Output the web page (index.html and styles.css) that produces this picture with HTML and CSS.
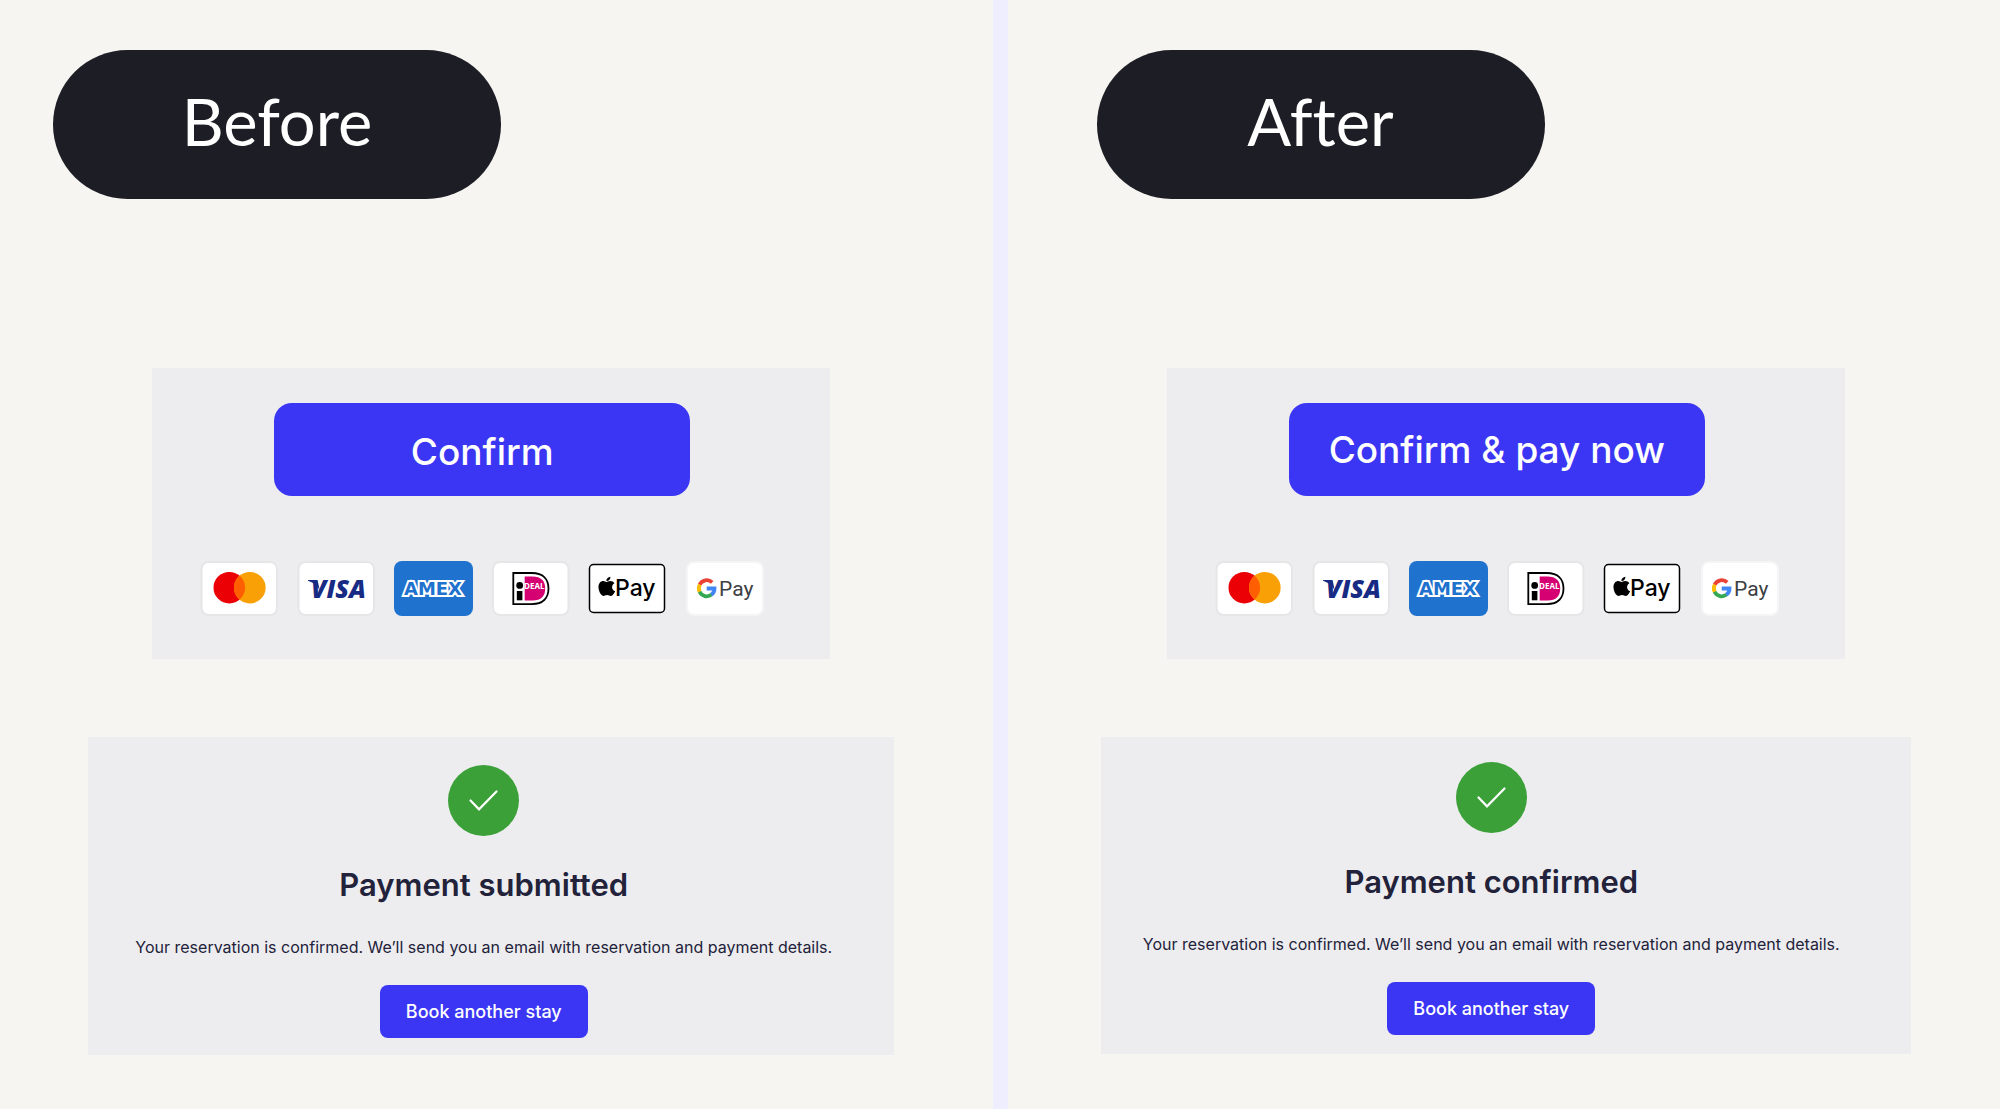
FILE: index.html
```html
<!DOCTYPE html>
<html lang="en">
<head>
    <meta charset="UTF-8">
    <meta name="viewport" content="width=device-width, initial-scale=1.0">
    <title>Payment - Before and After</title>
    <link rel="stylesheet" href="styles.css">
</head>
<body>
    <!-- Payment logos, shared by both panels -->
    <svg class="sprite" aria-hidden="true">
        <symbol id="mastercard" viewBox="0 0 79 57">
            <rect x="1.5" y="2" width="75.500" height="53" rx="7" fill="#fff" stroke="#e6e6e8" stroke-width="2"/>
            <circle cx="29.3" cy="27.7" r="15.8" fill="#eb0006"/>
            <circle cx="49.8" cy="27.7" r="15.8" fill="#f9a006"/>
            <path d="M39.5 15.6a15.8 15.8 0 0 1 0 24.2a15.8 15.8 0 0 1 0-24.2z" fill="#ff5f00"/>
        </symbol>
        <symbol id="visa" viewBox="0 0 79 57">
            <rect x="1.5" y="2" width="75.500" height="53" rx="7" fill="#fff" stroke="#e6e6e8" stroke-width="2"/>
            <path d="M11 20h7q2.500 0 3.200 3l1.600 8q-3-7.500-11.800-10.200z" fill="#172b85"/>
            <text class="visa-text" x="14" y="38">VISA</text>
        </symbol>
        <symbol id="amex" viewBox="0 0 79 57">
            <rect x="0" y="1" width="79" height="55" rx="8" fill="#1f72cd"/>
            <text class="amex-text" x="39" y="35" text-anchor="middle">AMEX</text>
        </symbol>
        <symbol id="ideal" viewBox="0 0 79 57">
            <rect x="2" y="2" width="75.500" height="53" rx="7" fill="#fff" stroke="#e6e6e8" stroke-width="2"/>
            <path d="M22.300 13h18.500c11.500 0 16.700 6.500 16.700 15.600s-5.200 15.500-16.700 15.500h-18.500z" fill="#fff" stroke="#000" stroke-width="1.800"/>
            <path d="M33.700 16.500h7.500c9.300 0 13 4.800 13 12.100s-3.700 12-13 12h-7.500z" fill="#d50072"/>
            <circle cx="28.700" cy="25.400" r="3.400"/>
            <path d="M25.800 31h5.600v9.300h-5.600z"/>
            <text class="ideal-text" x="33" y="29">DEAL</text>
        </symbol>
        <symbol id="apple-pay" viewBox="0 0 79 57">
            <rect x="1.500" y="4.500" width="75" height="48" rx="4" fill="#fff" stroke="#000" stroke-width="1.500"/>
            <path d="M20.700 17.400c.2 2.600-1.900 4.600-4.200 4.600c-.2-2.400 1.800-4.500 4.200-4.600zM16.600 23c1 0 2-1 4-1c1.800 0 3.400.9 4.300 2.200c-3.600 2-3 7 .8 8.400c-.9 2.200-2.600 4.800-4.400 4.800c-1.600 0-2.100-1-4-1s-2.500 1-4 1c-2.300 0-5-5-5-9.200c0-4 2.500-6.200 5-6.200c1.500 0 2.500 1 3.300 1z" transform="translate(2.500 0) scale(.96)"/>
            <text class="apple-text" x="27" y="36">Pay</text>
        </symbol>
        <symbol id="google-pay" viewBox="0 0 79 57">
            <rect x="2" y="2" width="76" height="53" rx="7" fill="#fff" stroke="#f5f5f6" stroke-width="2"/>
            <g fill="none" stroke-width="3.800">
                <path d="M14.600 24.800a7.900 7.900 0 0 1 12.600-2.400" stroke="#ea4335"/>
                <path d="M14.800 32.200a7.900 7.900 0 0 1 0-7.600" stroke="#fbbc05"/>
                <path d="M26.600 34.600a7.900 7.900 0 0 1-12-2.800" stroke="#34a853"/>
                <path d="M21.700 28.500h7.800a8 8 0 0 1-3.100 6.300" stroke="#4285f4"/>
            </g>
            <text class="google-text" x="34" y="36">Pay</text>
        </symbol>
        <symbol id="check" viewBox="0 0 71 71">
            <circle cx="35.500" cy="35.500" r="35.500" fill="#3aa037"/>
            <path d="M22.500 35.500l8.500 8.800l17.500-17.800" fill="none" stroke="#fff" stroke-width="2.200" stroke-linecap="round"/>
        </symbol>
    </svg>

    <main class="comparison">
        <section class="panel before">
            <h1 class="pill">Before</h1>
            <div class="checkout">
                <button class="confirm">Confirm</button>
                <div class="logos">
                    <svg role="img" aria-label="Mastercard"><use href="#mastercard"/></svg>
                    <svg role="img" aria-label="Visa"><use href="#visa"/></svg>
                    <svg role="img" aria-label="American Express"><use href="#amex"/></svg>
                    <svg role="img" aria-label="iDEAL"><use href="#ideal"/></svg>
                    <svg role="img" aria-label="Apple Pay"><use href="#apple-pay"/></svg>
                    <svg role="img" aria-label="Google Pay"><use href="#google-pay"/></svg>
                </div>
            </div>
            <div class="result">
                <svg class="check" aria-hidden="true"><use href="#check"/></svg>
                <h2>Payment submitted</h2>
                <p>Your reservation is confirmed. We’ll send you an email with reservation and payment details.</p>
                <button class="book">Book another stay</button>
            </div>
        </section>

        <section class="panel after">
            <h1 class="pill">After</h1>
            <div class="checkout">
                <button class="confirm">Confirm &amp; pay now</button>
                <div class="logos">
                    <svg role="img" aria-label="Mastercard"><use href="#mastercard"/></svg>
                    <svg role="img" aria-label="Visa"><use href="#visa"/></svg>
                    <svg role="img" aria-label="American Express"><use href="#amex"/></svg>
                    <svg role="img" aria-label="iDEAL"><use href="#ideal"/></svg>
                    <svg role="img" aria-label="Apple Pay"><use href="#apple-pay"/></svg>
                    <svg role="img" aria-label="Google Pay"><use href="#google-pay"/></svg>
                </div>
            </div>
            <div class="result">
                <svg class="check" aria-hidden="true"><use href="#check"/></svg>
                <h2>Payment confirmed</h2>
                <p>Your reservation is confirmed. We’ll send you an email with reservation and payment details.</p>
                <button class="book">Book another stay</button>
            </div>
        </section>
    </main>
</body>
</html>
```
FILE: styles.css
```css
* {
    box-sizing: border-box;
}
body {
    margin: 0;
    font-family: Inter, "Liberation Sans", sans-serif;
    font-variant-ligatures: none;
    background-color: #f6f5f1;
    color: #22223a;
}
.sprite {
    display: none;
}
.comparison {
    display: grid;
    grid-template-columns: 1fr 1fr;
    column-gap: 15px;
    min-height: 100vh;
    background-color: #eeeeff;
}
.panel {
    display: flex;
    flex-direction: column;
    align-items: center;
    padding: 50px 0;
    background-color: #f6f5f1;
}
.before {
    padding-right: 10px;
}
.after {
    padding-left: 4px;
}
.pill {
    align-self: flex-start;
    width: 448px;
    margin: 0 0 169px 53px;
    padding: 34px 0 41px;
    border-radius: 75px;
    background-color: #1d1d25;
    color: white;
    font-family: Lato, sans-serif;
    font-size: 65px;
    font-weight: 400;
    line-height: 74px;
    text-align: center;
}
.after .pill {
    margin-left: 85px;
}
button {
    border: none;
    background-color: #3a36f4;
    color: white;
    font-family: inherit;
    font-weight: 500;
    cursor: pointer;
}
button:hover {
    background-color: #2a26d8;
}

/* Checkout */
.checkout {
    display: flex;
    flex-direction: column;
    align-items: center;
    width: 82%;
    max-width: 678px;
    margin-bottom: 78px;
    padding: 35px 18px 42px 0;
    background-color: #ededef;
}
.confirm {
    width: 416px;
    height: 93px;
    margin-bottom: 64px;
    padding: 4px 0 0;
    border-radius: 18px;
    font-size: 37px;
}
.after .confirm {
    padding: 0;
}
.logos {
    display: flex;
    gap: 18px;
}
.logos svg {
    width: 79px;
    height: 57px;
}
.visa-text {
    font: italic 800 25px "Open Sans", sans-serif;
    fill: #172b85;
}
.amex-text {
    font: bold 18px "DejaVu Sans", sans-serif;
    fill: #1f72cd;
    stroke: white;
    stroke-width: 4px;
    paint-order: stroke;
}
.ideal-text {
    font: bold 8px "Open Sans", sans-serif;
    fill: white;
}
.apple-text {
    font: 500 23px Inter, sans-serif;
}
.google-text {
    font: 400 21px Roboto, sans-serif;
    fill: #3c4043;
}

/* Payment result */
.result {
    display: flex;
    flex-direction: column;
    align-items: center;
    width: 82%;
    max-width: 810px;
    padding: 28px 15px 17px 0;
    background-color: #ededef;
    text-align: center;
}
.after .result {
    padding-top: 25px;
    padding-right: 29px;
    padding-bottom: 19px;
}
.check {
    width: 71px;
    height: 71px;
}
.result h2 {
    margin: 29px 0 30px;
    font-size: 31px;
    font-weight: 600;
    line-height: 40px;
}
.result p {
    margin: 0 0 26px;
    font-size: 16px;
    font-variation-settings: "opsz" 20;
    line-height: 24px;
}
.book {
    height: 53px;
    padding: 0 26px;
    border-radius: 8px;
    font-size: 18px;
}
```
